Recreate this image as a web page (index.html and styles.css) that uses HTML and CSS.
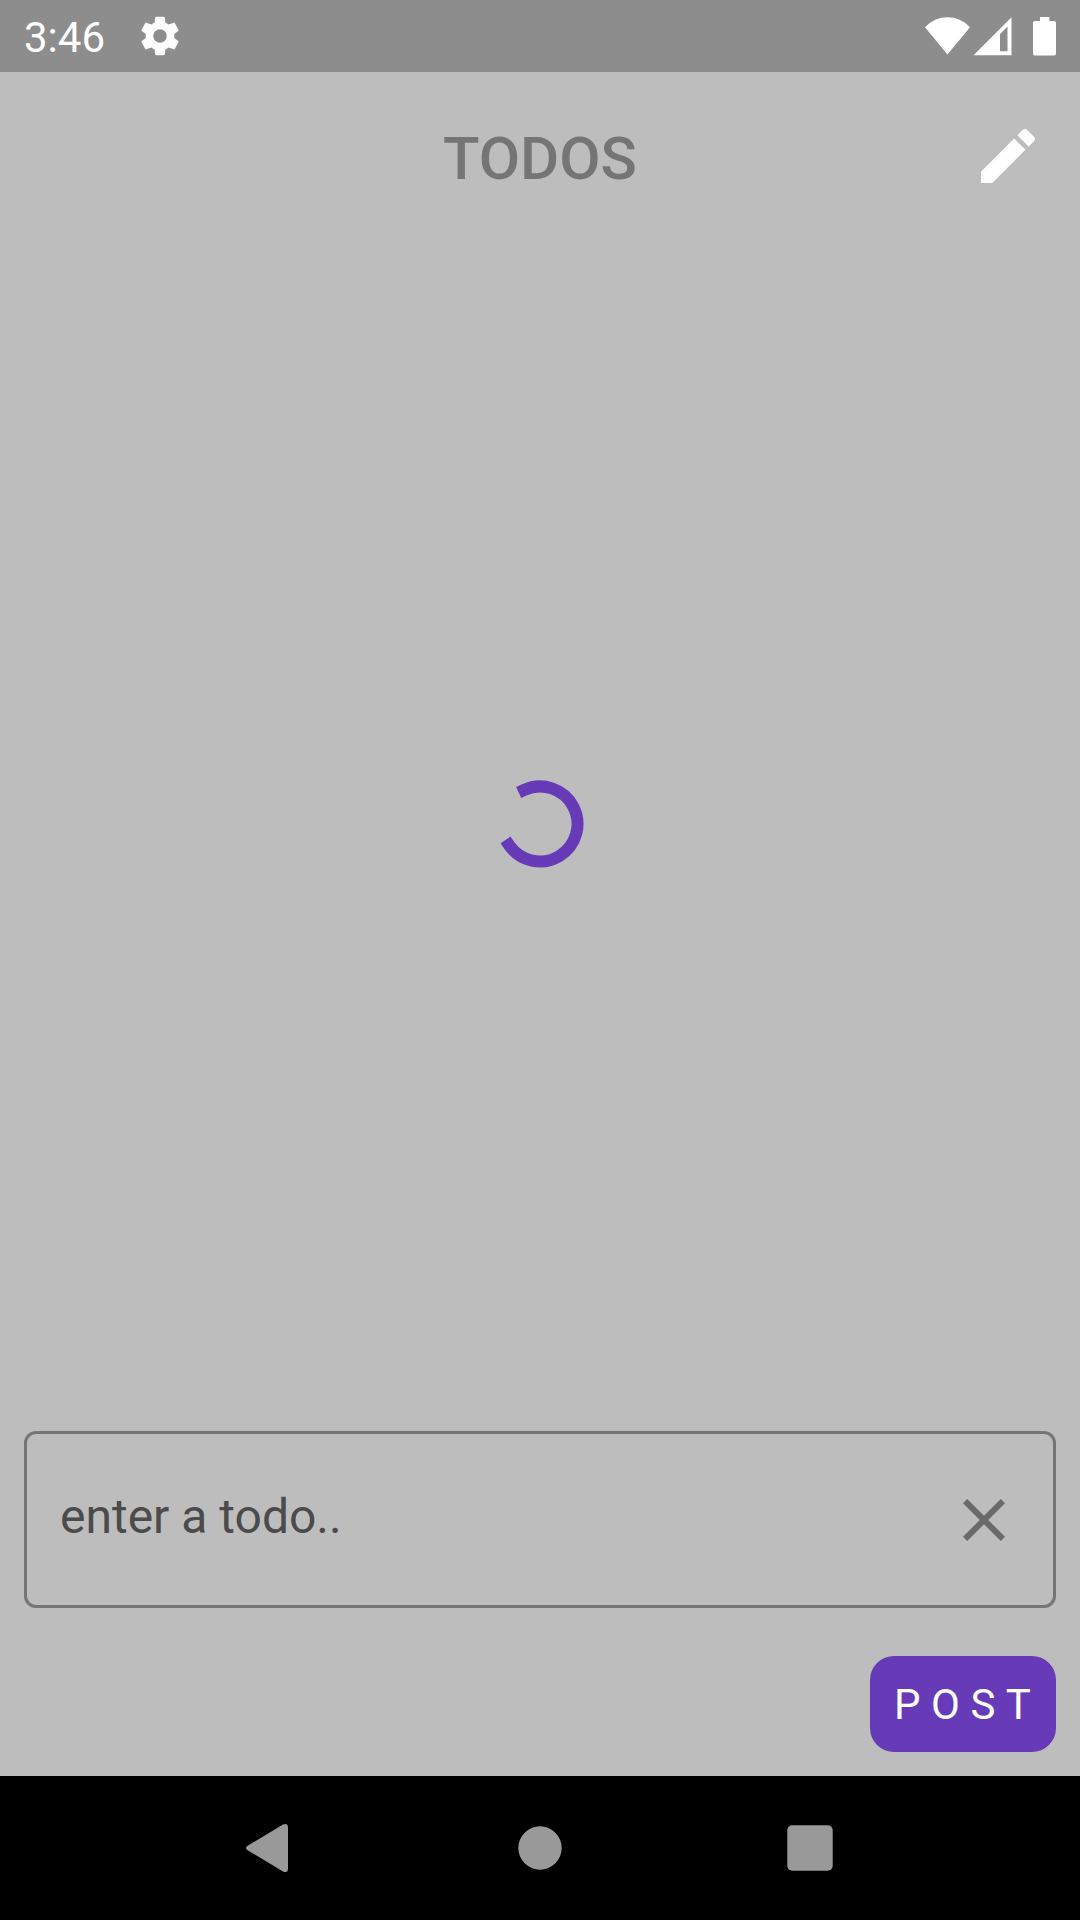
FILE: index.html
```html
<!DOCTYPE html>
<html lang="en">
<head>
<meta charset="utf-8">
<title>Todos</title>
<link rel="stylesheet" href="styles.css">
</head>
<body>
<div class="screen">
  <header class="status-bar">
    <span class="clock">3:46</span>
    <svg class="gear" viewBox="0 0 24 24"><path d="M19.43 12.98c.04-.32.07-.64.07-.98s-.03-.66-.07-.98l2.11-1.65c.19-.15.24-.42.12-.64l-2-3.46c-.12-.22-.39-.3-.61-.22l-2.49 1c-.52-.4-1.08-.73-1.69-.98l-.38-2.65C14.46 2.18 14.25 2 14 2h-4c-.25 0-.46.18-.49.42l-.38 2.65c-.61.25-1.17.59-1.69.98l-2.49-1c-.23-.09-.49 0-.61.22l-2 3.46c-.13.22-.07.49.12.64l2.11 1.65c-.04.32-.07.65-.07.98s.03.66.07.98l-2.11 1.65c-.19.15-.24.42-.12.64l2 3.46c.12.22.39.3.61.22l2.49-1c.52.4 1.08.73 1.69.98l.38 2.65c.03.24.24.42.49.42h4c.25 0 .46-.18.49-.42l.38-2.65c.61-.25 1.17-.59 1.69-.98l2.49 1c.23.09.49 0 .61-.22l2-3.46c.12-.22.07-.49-.12-.64l-2.11-1.65zM12 15.5c-1.93 0-3.5-1.57-3.5-3.5s1.57-3.5 3.5-3.5 3.5 1.57 3.5 3.5-1.57 3.5-3.5 3.5z"/></svg>
    <svg class="indicators" viewBox="0 0 132 40">
      <path d="M1 11.200Q10.500 1.300 23.500 1.300T46 11.200L23.500 38.500Z"/>
      <path fill-rule="evenodd" d="M49.500 39.300L87.500 1.300V39.300ZM76 18V35.300H83.500V10.500Z"/>
      <path d="M116 1h9.500v4h4.500a2 2 0 0 1 2 2v30.500a2 2 0 0 1-2 2h-19a2 2 0 0 1-2-2V7a2 2 0 0 1 2-2h5Z"/>
    </svg>
  </header>
  <div class="app-bar">
    <h1 class="title">TODOS</h1>
    <svg class="edit" viewBox="0 0 24 24"><path d="M3 17.250V21h3.750L17.810 9.940l-3.750-3.750L3 17.250zM20.710 7.040c.39-.39.39-1.020 0-1.410l-2.340-2.340c-.39-.39-1.020-.39-1.410 0l-1.830 1.830 3.750 3.750 1.830-1.830z"/></svg>
  </div>
  <main class="content">
    <svg class="spinner" viewBox="-60 -60 120 120"><path d="M-15.900 -34A37.500 37.500 0 1 1 -31.100 20.900"/></svg>
  </main>
  <div class="composer">
    <div class="field">
      <span class="placeholder">enter a todo..</span>
      <svg class="clear" viewBox="0 0 24 24"><path d="M19 6.410L17.590 5 12 10.590 6.410 5 5 6.410 10.590 12 5 17.590 6.410 19 12 13.410 17.590 19 19 17.590 13.410 12z"/></svg>
    </div>
    <button class="post">POST</button>
  </div>
  <nav class="nav-bar">
    <svg class="nav-icon" viewBox="0 0 72 72"><path d="M49 12.500Q54 10.500 54 15.500V56.500Q54 61.500 49 59.500L14 38.500Q10 36 14 33.500Z"/></svg>
    <svg class="nav-icon" viewBox="0 0 72 72"><circle cx="36" cy="36" r="21.700"/></svg>
    <svg class="nav-icon" viewBox="0 0 72 72"><rect x="13.300" y="13.300" width="45.400" height="45.400" rx="5"/></svg>
  </nav>
</div>
</body>
</html>
```
FILE: styles.css
```css
* { box-sizing: border-box; }
body { margin: 0; font-family: Roboto, sans-serif; }
svg { display: block; flex: none; }
.screen {
  width: 1080px;
  height: 1920px;
  display: flex;
  flex-direction: column;
  background: #bdbdbd;
}
.status-bar {
  height: 72px;
  padding: 0 24px;
  display: flex;
  align-items: center;
  background: #8d8d8d;
  color: #fff;
  fill: #fff;
}
.clock { width: 113px; padding-top: 3px; font-size: 42px; line-height: 50px; }
.gear { width: 46px; height: 46px; }
.indicators { width: 132px; height: 40px; margin-left: auto; margin-bottom: 1px; }
.app-bar {
  height: 168px;
  padding: 0 36px;
  display: grid;
  grid-template-columns: 72px 1fr 72px;
  align-items: center;
}
.title {
  grid-column: 2;
  margin: 0;
  padding-top: 6px;
  text-align: center;
  font-size: 60px;
  font-weight: 500;
  line-height: 72px;
  color: #757575;
}
.edit { width: 72px; height: 72px; fill: #fff; }
.content {
  flex: 1;
  display: flex;
  justify-content: center;
  padding-top: 523.5px;
}
.spinner { width: 120px; height: 120px; }
.spinner path { fill: none; stroke: #673ab7; stroke-width: 12; stroke-linecap: square; }
.composer {
  padding: 0 24px 24px;
  display: flex;
  flex-direction: column;
  align-items: flex-end;
  gap: 48px;
}
.field {
  width: 100%;
  height: 177px;
  padding: 0 33px;
  border: 3px solid #757575;
  border-radius: 12px;
  display: flex;
  align-items: center;
  justify-content: space-between;
}
.placeholder { padding-bottom: 6px; font-size: 48px; line-height: 60px; color: #4b4b4b; }
.clear { width: 72px; height: 72px; fill: #6a6a6a; }
.post {
  width: 186px;
  height: 96px;
  padding: 2px 0 0 24px;
  border: 0;
  border-radius: 24px;
  background: #673ab7;
  color: #fff;
  font: 400 42px/50px Roboto, sans-serif;
  letter-spacing: 10.5px;
  text-align: left;
}
.nav-bar {
  height: 144px;
  padding: 0 234px;
  display: flex;
  align-items: center;
  justify-content: space-between;
  background: #000;
  fill: #999;
}
.nav-icon { width: 72px; height: 72px; }
```
